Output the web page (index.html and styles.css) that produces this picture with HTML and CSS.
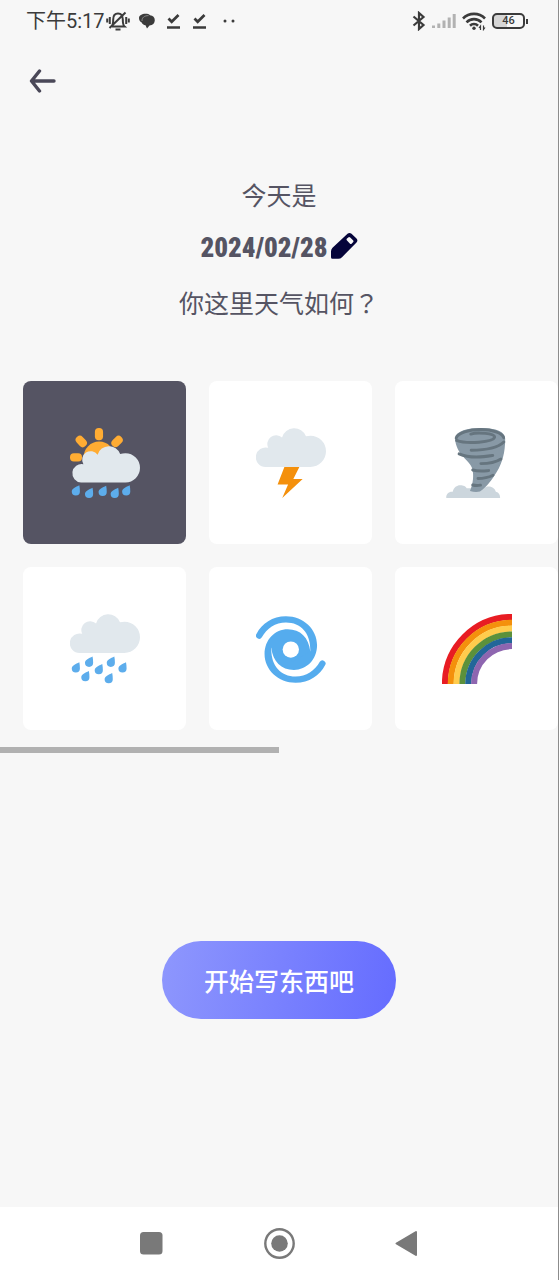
FILE: index.html
```html
<!DOCTYPE html>
<html lang="zh-CN">
<head>
<meta charset="utf-8">
<meta name="viewport" content="width=device-width, initial-scale=1">
<title>今天天气</title>
<link rel="stylesheet" href="styles.css">
</head>
<body>
<svg class="defs" aria-hidden="true">
  <defs>
    <path id="drop" fill="#5DADEC" d="M3.9 0C4.1 1 4.2 2.2 4.2 3.2a2.1 2.1 0 1 1-4.2 0C0 1.600 2 1 3.900 0z"/>
    <path id="cloud" fill="#E1E8ED" d="M28 4c-.8 0-1.600.1-2.300.3A6.500 6.500 0 0 0 13.400 4.900 4.500 4.500 0 0 0 6.300 10.200 5 5 0 1 0 5 20h23a8 8 0 0 0 0-16z"/>
    <path id="arm" d="M.3 10.200C3 5 8.500 1.200 15.400 1.200c9.100 0 16 6.800 16 14.800 0 7.500-5.400 12.800-11.900 12.800C13 28.800 8.600 24.500 7.900 17.400L17 12l10.900 7.200C28.300 10.500 23.500 4.400 15.400 4.400 10 4.400 5.500 7.500 3 12a1.600 1.600 0 0 1-2.700-1.800z"/>
  </defs>
</svg>

<header class="status">
  <div class="status-group">
    <span class="clock">下午5:17</span>
    <svg width="24" height="22" viewBox="0 0 24 22" fill="none" stroke="#3b3b3b" stroke-width="2">
      <path d="M6 16.500h12.500c-1.500-1.300-1.700-2.300-1.700-7C16.800 5.500 14.800 3.500 12 3.500S7.200 5.500 7.200 9.500c0 4.200-.2 5.500-1.700 7M19.500 2.500 3.500 18"/>
      <path d="M9.500 19.500h5"/>
      <path d="M3.800 7v7M1.200 8.500v4M20.200 7v7M22.800 8.500v4"/>
    </svg>
    <svg width="16" height="16" viewBox="0 0 16 16" fill="#3b3b3b">
      <path d="M0 5C0 2.500 3 .8 6.500.8c2 0 3.500.5 4.500 1.400 3 .3 4.800 2.300 4.800 5 0 3-2 5-5.300 5.300L8 15.500l-1.500-3.200c-2-.3-3.300-1.300-3.800-2.800C1 8.500 0 7 0 5z"/>
      <path d="M3 8C2.800 4.500 5.500 2.600 9.500 2.600" fill="none" stroke="#999" stroke-width=".8"/>
    </svg>
    <svg class="tick" width="14" height="18" viewBox="0 0 14 18" fill="none" stroke="#3b3b3b" stroke-width="2.700">
      <path d="m1.500 6.500 3.200 3.300L11.500 3M0 15.500h13"/>
    </svg>
    <svg class="tick" width="14" height="18" viewBox="0 0 14 18" fill="none" stroke="#3b3b3b" stroke-width="2.700">
      <path d="m1.500 6.500 3.200 3.300L11.500 3M0 15.500h13"/>
    </svg>
    <svg class="dots" width="12" height="4" viewBox="0 0 12 4" fill="#3b3b3b"><circle cx="2" cy="2" r="1.500"/><circle cx="10" cy="2" r="1.500"/></svg>
  </div>
  <div class="status-group status-right">
    <svg width="14" height="20" viewBox="0 0 14 20" fill="none" stroke="#3b3b3b" stroke-width="2.200">
      <path d="m1.500 5.500 10 8.500L7 18V2l4.500 4-10 8.500"/>
    </svg>
    <svg width="24" height="16" viewBox="0 0 24 16" fill="#b2b2b2">
      <path d="M0 12.500h3V15H0zM5.300 10.500h3V15h-3zM10.500 7.500h3V15h-3zM15.700 4.500h3V15h-3zM20.700 1h3v14h-3z"/>
    </svg>
    <svg width="24" height="20" viewBox="0 0 24 20" fill="none" stroke="#3b3b3b" stroke-width="2.600">
      <path d="M1 7.500a15.500 15.500 0 0 1 22 0M4.500 11.300a10.500 10.500 0 0 1 15 0M8 14.700a5.700 5.700 0 0 1 8 0"/>
      <circle cx="12" cy="17.200" r="1.700" fill="#3b3b3b" stroke="none"/>
      <path d="M18.500 19v-4l-1.500 2M21.500 14.500v4l1.500-2" stroke-width="1.200"/>
    </svg>
    <span class="battery"><span class="battery-body">46</span><span class="battery-tip"></span></span>
  </div>
</header>

<main class="page">
  <button class="back" aria-label="返回">
    <svg width="28" height="24" viewBox="0 0 28 24" fill="none" stroke="#4a4858" stroke-width="3.400" stroke-linecap="round" stroke-linejoin="round"><path d="M11.500 2 3.500 12l8 10M3.500 12H26"/></svg>
  </button>

  <section class="intro">
    <p>今天是</p>
    <p class="date-row">
      <time class="date" datetime="2024-02-28">2024/02/28</time>
      <button class="edit" aria-label="修改日期">
        <svg width="28" height="28" viewBox="0 0 28 28"><path fill="#05043a" fill-rule="evenodd" d="M17.500 1.800a3 3 0 0 1 4 0l5 4.700a3 3 0 0 1 0 4L12 25.200q-1.500 1.600-3.700 1.600H2.500Q1 26.800 1 25.300v-6q0-2 1.500-3.500zM17 6.600q-1 1 0 2l2.800 2.800q1 1 2 0l1.200-1.200q1-1 0-2l-2.800-2.800q-1-1-2 0z"/></svg>
      </button>
    </p>
    <p>你这里天气如何<span class="mark" lang="zh-TW">？</span></p>
  </section>

  <section class="weather" aria-label="天气">
    <div class="cards">
      <button class="card selected" aria-label="晴转雨" aria-pressed="true">
        <svg viewBox="0 0 36 36">
          <g fill="#FFAC33"><circle cx="15" cy="15" r="8"/><rect x="12.800" width="4.200" height="6.300" rx="2"/><rect y="13" width="6.200" height="4.200" rx="2"/><rect x="3.700" y="3.700" width="4.200" height="6.400" rx="2" transform="rotate(-43 5.800 6.900)"/><rect x="22.100" y="3.700" width="4.200" height="6.400" rx="2" transform="rotate(45 24.200 6.900)"/></g>
          <path fill="#E1E8ED" d="M28.500 13c-1 0-1.800.1-2.700.4A6.100 6.100 0 0 0 14.200 13.700 4.400 4.400 0 0 0 6.900 18.600 4.750 4.750 0 1 0 5.700 28h22.800a7.500 7.500 0 0 0 0-15z"/>
          <use href="#drop" x=".9" y="29.400"/><use href="#drop" x="7.700" y="30.700"/><use href="#drop" x="14.700" y="29.700"/><use href="#drop" x="20.900" y="30.700"/><use href="#drop" x="26.800" y="29.400"/>
        </svg>
      </button>
      <button class="card" aria-label="雷电">
        <svg viewBox="0 0 36 36"><use href="#cloud"/><path fill="#F4900C" d="M14.600 20h7.700l-3.100 6.200H24L13.500 36l3-6.900h-5.400z"/></svg>
      </button>
      <button class="card" aria-label="龙卷风">
        <svg viewBox="0 0 36 36">
          <path fill="#CCD6DD" d="M2.200 36c-.2-2 1.300-3.400 3.300-3.200.7-2.600 2.500-3.600 4.500-3.300 1.500.2 2.300.8 2.700 1.500h9c1-1.300 5-1.500 6 1.800 1.600.4 2.200 1.600 2.200 3.200z"/>
          <path fill="#8899A6" d="M6.700 5C7.500 1.500 13 0 20 0c8 0 12.500 2 12.500 5.500 0 7-1.500 12.500-4.300 17-2.600 4.300-5.200 7.900-8.700 10.200q-2.500.5-5.100-.3c1.700-4 2-8 1.200-11.400C14.500 16.500 7 14 6.700 5z"/>
          <g fill="none" stroke="#66757F" stroke-width="1.500" stroke-linecap="round">
            <path d="M14.800 3.100c3-.9 13-.6 12.200 1.800-.8 2.300-14 3.600-19.500 1.500"/>
            <path d="M7.300 5.200C8 2.500 14 .8 20 .8S31 2.500 31.700 5"/>
            <path d="M15 11.400c6 0 13.500-1 16.800-4.200M8.800 13.300c6 2.700 13 1.500 17.300.8M20 18.300c4.300 0 7.500-.6 10.300-2.400M15.800 21.600c3 .8 5.500.5 8.200.3M18.500 26c3 0 5.300-.5 7.700-1.700M15.800 29.300c1.500.4 2.800.3 4 .1"/>
          </g>
        </svg>
      </button>
      <button class="card" aria-label="下雨">
        <svg viewBox="0 0 36 36"><use href="#cloud"/><use href="#drop" x=".9" y="24.800"/><use href="#drop" x="7.700" y="21.900"/><use href="#drop" x="12.700" y="25.700"/><use href="#drop" x="18.900" y="21.900"/><use href="#drop" x="24.900" y="24.800"/><use href="#drop" x="5.800" y="29.300"/><use href="#drop" x="17.800" y="30.300"/></svg>
      </button>
      <button class="card" aria-label="台风">
        <svg viewBox="0 0 36 36"><g fill="#55ACEE"><use href="#arm"/><use href="#arm" transform="rotate(180 17.900 18.300)"/></g><circle cx="17.900" cy="18.300" r="4.200" fill="#fff"/></svg>
      </button>
      <button class="card" aria-label="彩虹">
        <svg viewBox="0 0 36 36">
          <g fill="none" stroke-width="3.100">
            <path stroke="#E81C23" d="M1.500 36A34.500 34.500 0 0 1 36 1.500"/>
            <path stroke="#F4900C" d="M4.500 36A31.500 31.500 0 0 1 36 4.500"/>
            <path stroke="#FFCC4D" d="M7.500 36A28.500 28.500 0 0 1 36 7.500"/>
            <path stroke="#5C913B" d="M10.500 36A25.500 25.500 0 0 1 36 10.500"/>
            <path stroke="#226699" d="M13.500 36A22.500 22.500 0 0 1 36 13.500"/>
            <path stroke="#8E66B0" d="M16.500 36A19.500 19.500 0 0 1 36 16.500"/>
          </g>
        </svg>
      </button>
    </div>
    <div class="scroll-thumb"></div>
  </section>

  <button class="start">开始写东西吧</button>
</main>

<nav class="system-nav">
  <button aria-label="最近任务"><svg width="32" height="32" viewBox="0 0 32 32"><rect x="5" y="5" width="22.500" height="22.500" rx="3.500" fill="#797979"/></svg></button>
  <button aria-label="主屏幕"><svg width="32" height="32" viewBox="0 0 32 32"><circle cx="16.500" cy="16.500" r="14.200" fill="none" stroke="#797979" stroke-width="2.400"/><circle cx="16.500" cy="16.500" r="8.300" fill="#797979"/></svg></button>
  <button aria-label="返回上一页"><svg width="32" height="32" viewBox="0 0 32 32"><path d="M5.500 16.500 25 5v23z" fill="#797979" stroke="#797979" stroke-width="2" stroke-linejoin="round"/></svg></button>
</nav>
</body>
</html>
```

FILE: styles.css
```css
* {
  box-sizing: border-box;
}

body {
  margin: 0;
  min-height: 100vh;
  display: flex;
  flex-direction: column;
  background: #f7f7f7;
  border-right: 1px solid #8c8c8c;
  color: #555463;
  font-family: "Noto Sans CJK SC", sans-serif;
}

button {
  margin: 0;
  padding: 0;
  border: 0;
  background: none;
  font: inherit;
  color: inherit;
  cursor: pointer;
}

svg {
  display: block;
  flex: none;
}

.defs {
  position: absolute;
  width: 0;
  height: 0;
}

.status {
  display: flex;
  justify-content: space-between;
  align-items: center;
  height: 42px;
  padding: 0 30px 0 26px;
  color: #3b3b3b;
}

.status-group {
  display: flex;
  align-items: center;
  gap: 12px;
}

.clock {
  margin-right: -11px;
  font: 20px/24px Roboto, "Noto Sans CJK SC", sans-serif;
}

.status-group > svg + svg {
  margin-left: -3px;
}

.status-group > svg + .tick {
  margin-left: 0;
}

.status-group > .tick + .dots {
  margin-left: 4px;
}

.status-right {
  gap: 6px;
}

.status-right > svg + svg {
  margin-left: 0;
}

.battery {
  display: flex;
  align-items: center;
  gap: 1px;
}

.battery-body {
  width: 33px;
  height: 16px;
  border: 2px solid #3b3b3b;
  border-radius: 5px;
  background: linear-gradient(90deg, #d6d6d6 46%, transparent 46%);
  font: 500 11px/12px Roboto, sans-serif;
  text-align: center;
}

.battery-tip {
  width: 2px;
  height: 5px;
  background: #3b3b3b;
}

.page {
  flex: 1;
  display: flex;
  flex-direction: column;
}

.back {
  align-self: flex-start;
  margin: 27px 0 0 28px;
}

.intro {
  margin-top: 74px;
  font-size: 25px;
  line-height: 54px;
  text-align: center;
}

.intro p {
  margin: 0;
}

.mark {
  font-family: "Noto Sans CJK TC", sans-serif;
}

.date-row {
  display: flex;
  justify-content: center;
  align-items: center;
  gap: 2px;
}

.date {
  font-family: "Liberation Sans Narrow", "Roboto Condensed", Roboto, sans-serif;
  font-size: 27px;
  font-weight: 900;
}

.edit {
  padding-bottom: 5px;
}

.weather {
  margin-top: 52px;
}

.cards {
  display: grid;
  grid-template-columns: repeat(3, 163px);
  grid-auto-rows: 163px;
  gap: 23px;
  padding: 0 23px 17px;
  overflow-x: auto;
  scrollbar-width: none;
}

.card {
  display: grid;
  place-items: center;
  border-radius: 8px;
  background: #fff;
}

.card svg {
  width: 70px;
  height: 70px;
}

.selected {
  background: #555463;
}

.scroll-thumb {
  width: 50%;
  height: 6px;
  background: #b1b1b1;
}

.start {
  align-self: center;
  margin: 188px 0 48px;
  padding: 20px 42px;
  border-radius: 40px;
  background: linear-gradient(100deg, #8e97fd, #656cff);
  color: #fff;
  font-size: 25px;
  font-weight: 500;
  line-height: 38px;
}

.system-nav {
  display: flex;
  justify-content: center;
  align-items: center;
  gap: 96px;
  height: 73px;
  padding-bottom: 2px;
  background: #fff;
}
```
